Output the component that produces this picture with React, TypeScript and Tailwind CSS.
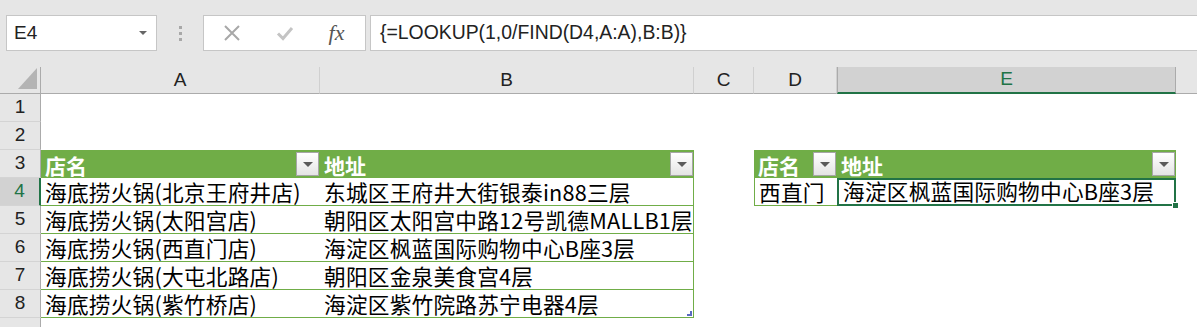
const cellFont = { fontFamily: '"Noto Sans CJK SC", "Liberation Sans", sans-serif' }

function FilterButton() {
  return (
    <div className="w-[23px] h-[24px] mr-[1px] border border-[#a6a6a6] bg-gradient-to-b from-white to-[#e4e4e4] flex items-center justify-center shrink-0">
      <div className="w-0 h-0 border-l-[5px] border-r-[5px] border-t-[5px] border-l-transparent border-r-transparent border-t-[#5a5a5a]" />
    </div>
  )
}

function HeaderCell({ label }: { label: string }) {
  return (
    <div className="bg-[#70ad47] h-[28px] flex items-center justify-between pl-[4px]">
      <span className="text-white font-bold text-[21px] leading-none pt-[3px]" style={cellFont}>{label}</span>
      <FilterButton />
    </div>
  )
}

function DataCell({ text, extra = '' }: { text?: string; extra?: string }) {
  return (
    <div className={`h-[28px] flex items-end pl-[4px] pb-[2px] whitespace-nowrap ${extra}`}>
      <span className="text-[21.7px] leading-none text-black tracking-[0.2px]" style={cellFont}>{text}</span>
    </div>
  )
}

function RowHead({ n, active = false }: { n?: number; active?: boolean }) {
  return (
    <div
      className={`h-[28px] flex items-center justify-center border-b border-[#d4d4d4] text-[19px] ${
        active ? 'bg-[#d2d2d2] text-[#217346] border-r-2 border-r-[#217346]' : 'bg-[#e6e6e6] text-[#222] border-r border-r-[#ababab]'
      }`}
      style={{ fontFamily: '"Liberation Sans", sans-serif' }}
    >
      {n}
    </div>
  )
}

const rows = [
  ['海底捞火锅(北京王府井店)', '东城区王府井大街银泰in88三层'],
  ['海底捞火锅(太阳宫店)', '朝阳区太阳宫中路12号凯德MALLB1层'],
  ['海底捞火锅(西直门店)', '海淀区枫蓝国际购物中心B座3层'],
  ['海底捞火锅(大屯北路店)', '朝阳区金泉美食宫4层'],
  ['海底捞火锅(紫竹桥店)', '海淀区紫竹院路苏宁电器4层'],
]

export default function App() {
  const sans = { fontFamily: '"Liberation Sans", sans-serif' }
  return (
    <div className="w-[1197px] h-[327px] overflow-hidden bg-white flex flex-col">
      {/* formula bar */}
      <div className="h-[67px] bg-[#e6e6e6] flex items-start pt-[15px] pl-[6px] shrink-0">
        <div className="w-[151px] h-[36px] bg-white border border-[#c6c6c6] flex items-center justify-between pl-[7px] pr-[9px]">
          <span className="text-[19px] text-[#222]" style={sans}>E4</span>
          <div className="w-0 h-0 border-l-[4px] border-r-[4px] border-t-[4px] border-l-transparent border-r-transparent border-t-[#666]" />
        </div>
        <div className="w-[46px] h-[36px] flex flex-col items-center justify-center gap-[3px]">
          <div className="w-[3px] h-[3px] bg-[#a8a8a8]" />
          <div className="w-[3px] h-[3px] bg-[#a8a8a8]" />
          <div className="w-[3px] h-[3px] bg-[#a8a8a8]" />
        </div>
        <div className="w-[163px] h-[36px] bg-white border border-[#c6c6c6] flex items-center">
          <div className="w-[55px] flex justify-center">
            <svg width="18" height="18" viewBox="0 0 18 18">
              <path d="M2 2 L16 16 M16 2 L2 16" stroke="#a8a8a8" strokeWidth="2" />
            </svg>
          </div>
          <div className="w-[52px] flex justify-center">
            <svg width="18" height="16" viewBox="0 0 18 16">
              <path d="M2 8.5 L7 13.5 L16 3" stroke="#c4c4c4" strokeWidth="3" fill="none" />
            </svg>
          </div>
          <div className="flex-1 flex justify-center pr-[3px]">
            <span className="italic text-[22px] text-[#555] leading-none" style={{ fontFamily: '"Liberation Serif", serif' }}>
              fx
            </span>
          </div>
        </div>
        <div className="ml-[4px] flex-1 h-[36px] bg-white border-y border-l border-[#c6c6c6] flex items-center pl-[9px]">
          <span className="text-[19.4px] text-[#222]" style={sans}>{'{=LOOKUP(1,0/FIND(D4,A:A),B:B)}'}</span>
        </div>
      </div>

      {/* grid */}
      <div className="grid grid-cols-[41px_279px_374px_60px_83px_339px_1fr] content-start">
        {/* column headers */}
        <div className="h-[27px] bg-[#e6e6e6] border-r border-b border-[#ababab] flex items-end justify-end pr-[3px] pb-[4px]">
          <svg width="19" height="21" viewBox="0 0 19 21">
            <polygon points="19,0 19,21 0,21" fill="#b4b4b4" />
          </svg>
        </div>
        {['A', 'B', 'C', 'D'].map(c => (
          <div key={c} className="h-[27px] bg-[#e6e6e6] border-r border-[#d0d0d0] border-b border-b-[#ababab] flex items-center justify-center text-[19px] text-[#222]" style={sans}>
            {c}
          </div>
        ))}
        <div className="h-[27px] bg-[#d2d2d2] border-x border-[#ababab] border-b-2 border-b-[#217346] flex items-center justify-center text-[19px] text-[#217346]" style={sans}>
          E
        </div>
        <div className="h-[27px] bg-[#e6e6e6] border-b border-[#ababab]" />

        {/* row 1, 2 */}
        {[1, 2].map(n => (
          <div key={n} className="contents">
            <RowHead n={n} />
            <div className="col-span-6 h-[28px]" />
          </div>
        ))}

        {/* row 3 */}
        <RowHead n={3} />
        <HeaderCell label="店名" />
        <HeaderCell label="地址" />
        <div />
        <HeaderCell label="店名" />
        <HeaderCell label="地址" />
        <div />

        {/* rows 4-8 */}
        {rows.map((r, i) => {
          const n = i + 4
          return (
            <div key={n} className="contents">
              <RowHead n={n} active={n === 4} />
              <DataCell text={r[0]} extra="border-b border-[#70ad47]" />
              <div className="relative">
                <DataCell text={r[1]} extra="border-b border-r border-[#70ad47]" />
                {n === 8 && (
                  <div className="absolute right-[2px] bottom-[2px] w-[5px] h-[5px] border-r-2 border-b-2 border-[#5b6bc0]" />
                )}
              </div>
              <div />
              {n === 4 ? (
                <>
                  <DataCell text="西直门" extra="border-l border-b border-[#70ad47]" />
                  <div className="relative">
                    <DataCell text="海淀区枫蓝国际购物中心B座3层" extra="border-2 border-[#217346] pl-[3px] pb-[0px]" />
                    <div className="absolute -right-[3px] -bottom-[3px] w-[7px] h-[7px] bg-[#217346] border border-white" />
                  </div>
                </>
              ) : (
                <>
                  <div />
                  <div />
                </>
              )}
              <div />
            </div>
          )
        })}
        <RowHead />
        <div className="col-span-6" />
      </div>
    </div>
  )
}
